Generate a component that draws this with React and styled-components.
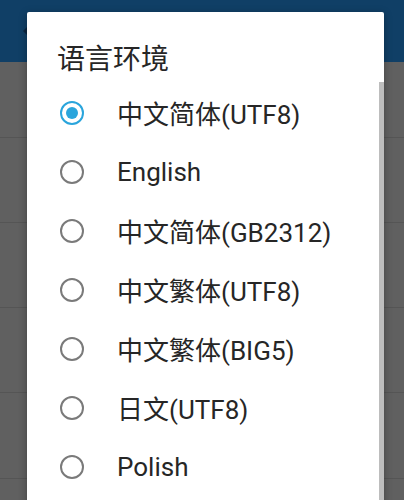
import React from "react";
import styled, { createGlobalStyle } from "styled-components";

const Global = createGlobalStyle`
  html, body { margin: 0; padding: 0; }
  body { font-family: Roboto, "Noto Sans CJK SC", sans-serif; background: #5f5f5f; }
  #root { width: 404px; height: 500px; }
`;

const Screen = styled.div`
  position: relative;
  width: 404px;
  height: 500px;
  overflow: hidden;
  background: #5f5f5f;
  display: flex;
  flex-direction: column;
`;

const TopBar = styled.div`
  height: 62px;
  flex: none;
  background: #103f66;
  display: flex;
  align-items: center;
  padding-left: 19px;
  box-sizing: border-box;
`;

const ListRow = styled.div`
  height: ${(p) => p.$h}px;
  flex: none;
  box-sizing: border-box;
  border-bottom: 1px solid #555555;
  background: #606060;
`;

const Dialog = styled.div`
  position: absolute;
  left: 27px;
  top: 12px;
  width: 357px;
  height: 520px;
  background: #ffffff;
  border-radius: 2px;
  box-shadow: 0 2px 8px rgba(0, 0, 0, 0.3);
  display: flex;
  flex-direction: column;
`;

const Title = styled.div`
  margin: 29px 0 0 30px;
  height: 32px;
  line-height: 32px;
  font-size: 28px;
  color: #262626;
  font-family: "Noto Sans CJK SC", Roboto, sans-serif;
`;

const Options = styled.div`
  margin-top: 10px;
  display: flex;
  flex-direction: column;
`;

const Option = styled.div`
  height: 59px;
  display: flex;
  align-items: center;
  padding-left: 33px;
  gap: 33px;
`;

const Radio = styled.span`
  box-sizing: border-box;
  width: 24px;
  height: 24px;
  border-radius: 50%;
  border: 2.3px solid ${(p) => (p.$on ? "#2aa5dc" : "#7a7a7a")};
  display: flex;
  align-items: center;
  justify-content: center;
  flex: none;
  &::after {
    content: "";
    display: ${(p) => (p.$on ? "block" : "none")};
    width: 12px;
    height: 12px;
    border-radius: 50%;
    background: #2aa5dc;
  }
`;

const Label = styled.span`
  font-size: 26px;
  color: #262626;
  font-family: Roboto, "Noto Sans CJK SC", sans-serif;
  white-space: nowrap;
`;

const ScrollBar = styled.div`
  position: absolute;
  right: 0;
  top: 70px;
  bottom: 0;
  width: 5px;
  background: #bdbdbd;
`;

const options = [
  "中文简体(UTF8)",
  "English",
  "中文简体(GB2312)",
  "中文繁体(UTF8)",
  "中文繁体(BIG5)",
  "日文(UTF8)",
  "Polish",
];

export default function App() {
  return (
    <>
      <Global />
      <Screen>
        <TopBar>
          <svg width="24" height="24" viewBox="0 0 24 24">
            <path d="M20 11H7.8l5.6-5.6L12 4l-8 8 8 8 1.4-1.4L7.8 13H20z" fill="#0a2640" />
          </svg>
        </TopBar>
        <ListRow $h={76} />
        <ListRow $h={85} />
        <ListRow $h={85} />
        <ListRow $h={85} />
        <ListRow $h={86} />
        <ListRow $h={40} />
        <Dialog>
          <Title>语言环境</Title>
          <Options>
            {options.map((o, i) => (
              <Option key={o}>
                <Radio $on={i === 0} />
                <Label>{o}</Label>
              </Option>
            ))}
          </Options>
          <ScrollBar />
        </Dialog>
      </Screen>
    </>
  );
}
